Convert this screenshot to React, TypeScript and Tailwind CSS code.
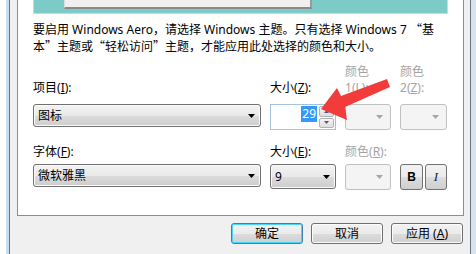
import React from "react";

// small down-pointing triangle used by the combo boxes
const Caret = ({ color = "#000" }: { color?: string }) => (
  <svg width="7" height="4" viewBox="0 0 7 4">
    <path d="M0 0h7L3.5 4z" fill={color} />
  </svg>
);

const Q = ({ c }: { c: string }) => (
  <span className="font-['Noto_Sans_CJK_SC',sans-serif]">{c}</span>
);

const Combo = ({ text, h = "h-[23px]" }: { text: string; h?: string }) => (
  <div
    className={`${h} rounded-[3px] border border-[#707070] bg-[linear-gradient(to_bottom,#f3f3f3_0%,#e9e9e9_50%,#dcdcdc_51%,#cdcdcd_100%)] flex items-center justify-between pl-[4px] pr-[5px] shadow-[inset_0_0_0_1px_#fbfbfb]`}
  >
    <span className="text-[12px] leading-[16px] text-black">{text}</span>
    <Caret />
  </div>
);

const DisabledCombo = () => (
  <div className="h-[26px] rounded-[3px] border border-[#c0c0c0] bg-[#f4f4f4] flex items-center justify-end pr-[7px]">
    <Caret color="#a6a6a6" />
  </div>
);

const Label = ({
  pre,
  key1,
  gray,
}: {
  pre: string;
  key1: string;
  gray?: boolean;
}) => (
  <div className={`text-[12px] leading-[16px] ${gray ? "text-[#a3a3a3]" : "text-black"}`}>
    {pre}(<span className="underline">{key1}</span>):
  </div>
);

const Button = ({
  children,
  primary,
}: {
  children: React.ReactNode;
  primary?: boolean;
}) => (
  <div
    className={`w-[72px] h-[21px] rounded-[3px] border flex items-center justify-center text-[12px] leading-[16px] text-black bg-[linear-gradient(to_bottom,#f2f2f2_0%,#ebebeb_50%,#dddddd_51%,#cfcfcf_100%)] ${
      primary
        ? "border-[#3c7fb1] shadow-[inset_0_0_0_1px_#48d7fb]"
        : "border-[#707070] shadow-[inset_0_0_0_1px_#fcfcfc]"
    }`}
  >
    {children}
  </div>
);

export default function App() {
  return (
    <div className="relative w-[476px] h-[254px] overflow-hidden flex bg-[#f0f0f0] font-['Noto_Sans','Noto_Sans_CJK_SC',sans-serif]">
      {/* left window frame */}
      <div className="w-[6px] bg-white" />
      <div className="w-[3px] bg-[#c4ddef]" />
      <div className="w-[1px] bg-[#6f747a]" />

      <div className="w-[460px] flex flex-col">
        {/* white preview / settings panel */}
        <div className="ml-[7px] mt-[-1px] w-[447px] h-[217px] border border-[#8a8d94] bg-white flex flex-col">
          {/* preview strip */}
          <div className="ml-[15px] w-[415px] h-[14px] border-l border-r border-b border-[#d6d6d6] bg-[#7ccbc7] pl-[30px]">
            <div className="w-[248px] h-[9px] bg-[#f0f0f0] border-l border-[#dcdcdc] border-r-2 border-r-[#9a9a9a] border-b-2 border-b-[#8a8a8a]" />
          </div>

          <p className="mt-[7px] pl-[15px] text-[12px] leading-[16px] text-black whitespace-nowrap">
            要启用 Windows Aero，请选择 Windows 主题。只有选择 Windows 7 <Q c="“" />基
            <br />
            本<Q c="”" />主题或<Q c="“" />轻松访问<Q c="”" />主题，才能应用此处选择的颜色和大小。
          </p>

          <div className="pl-[15px] grid grid-cols-[228px_66px_46px_47px] gap-x-[9px]">
            {/* label row 1 */}
            <div className="mt-[9px] h-[32px] flex items-end">
              <Label pre="项目" key1="I" />
            </div>
            <div className="mt-[9px] h-[32px] flex items-end">
              <Label pre="大小" key1="Z" />
            </div>
            <div className="mt-[9px] h-[32px] flex flex-col justify-end">
              <div className="text-[12px] leading-[16px] text-[#a3a3a3]">颜色</div>
              <Label pre="1" key1="L" gray />
            </div>
            <div className="mt-[9px] h-[32px] flex flex-col justify-end">
              <div className="text-[12px] leading-[16px] text-[#a3a3a3]">颜色</div>
              <Label pre="2" key1="Z" gray />
            </div>

            {/* controls row 1 */}
            <div className="mt-[8px]">
              <Combo text="图标" />
            </div>
            <div className="mt-[8px] h-[26px] border border-[#a3c2de] bg-white flex">
              <div className="flex-1 flex justify-end items-start pt-[1px] pr-[2px]">
                <span className="bg-[#3399ff] text-white text-[12px] leading-[16px] px-[1px]">29</span>
              </div>
              <div className="w-[16px] flex flex-col gap-[1px] py-[1px] pr-[1px]">
                <div className="flex-1 rounded-[2px] border border-[#b4b4b4] bg-[linear-gradient(to_bottom,#f4f4f4,#dedede)] flex items-center justify-center">
                  <svg width="5" height="3" viewBox="0 0 5 3">
                    <path d="M0 3h5L2.5 0z" fill="#4c5a88" />
                  </svg>
                </div>
                <div className="flex-1 rounded-[2px] border border-[#b4b4b4] bg-[linear-gradient(to_bottom,#f4f4f4,#dedede)] flex items-center justify-center">
                  <svg width="5" height="3" viewBox="0 0 5 3">
                    <path d="M0 0h5L2.5 3z" fill="#4c5a88" />
                  </svg>
                </div>
              </div>
            </div>
            <div className="mt-[8px]">
              <DisabledCombo />
            </div>
            <div className="mt-[8px]">
              <DisabledCombo />
            </div>

            {/* label row 2 */}
            <div className="mt-[14px]">
              <Label pre="字体" key1="F" />
            </div>
            <div className="mt-[14px]">
              <Label pre="大小" key1="E" />
            </div>
            <div className="mt-[14px] col-span-2">
              <Label pre="颜色" key1="R" gray />
            </div>

            {/* controls row 2 */}
            <div className="mt-[4px]">
              <Combo text="微软雅黑" />
            </div>
            <div className="mt-[4px]">
              <Combo text="9" h="h-[25px]" />
            </div>
            <div className="mt-[4px]">
              <DisabledCombo />
            </div>
            <div className="mt-[4px] flex gap-[2px]">
              <div className="w-[23px] h-[26px] rounded-[3px] border border-[#707070] bg-[linear-gradient(to_bottom,#f2f2f2_0%,#ebebeb_50%,#dddddd_51%,#cfcfcf_100%)] flex items-center justify-center">
                <span className="font-['Liberation_Sans',sans-serif] font-bold text-[12px] text-black">B</span>
              </div>
              <div className="w-[22px] h-[26px] rounded-[3px] border border-[#707070] bg-[linear-gradient(to_bottom,#f2f2f2_0%,#ebebeb_50%,#dddddd_51%,#cfcfcf_100%)] flex items-center justify-center">
                <span className="font-['Liberation_Serif',serif] italic text-[13px] text-[#1a1a5a]">I</span>
              </div>
            </div>
          </div>
        </div>

        {/* dialog buttons */}
        <div className="mt-[7px] pr-[7px] flex justify-end gap-[8px]">
          <Button primary>确定</Button>
          <Button>取消</Button>
          <Button>
            应用 (<span className="underline">A</span>)
          </Button>
        </div>
      </div>

      {/* right window frame */}
      <div className="w-[1px] bg-[#6f747a]" />
      <div className="flex-1 bg-[#d3e5f3]" />

      {/* red annotation arrow */}
      <svg className="absolute inset-0 pointer-events-none" width="476" height="254" viewBox="0 0 476 254">
        <polygon
          points="321,109 337,88 341,96 387,79 390,87 345,107 347,120"
          fill="#f23b3b"
        />
      </svg>
    </div>
  );
}
